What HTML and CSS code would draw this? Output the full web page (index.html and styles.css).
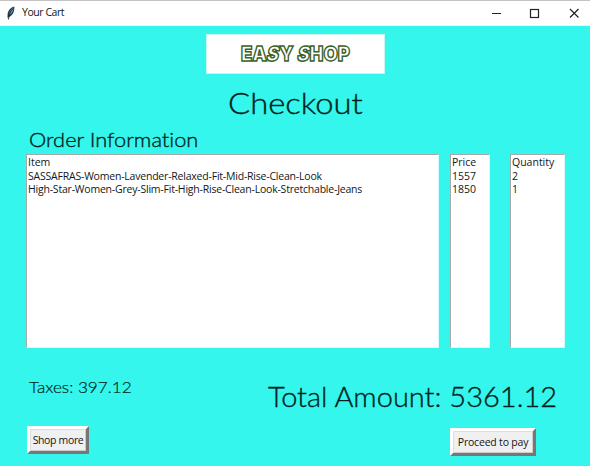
FILE: index.html
```html
<!DOCTYPE html>
<html lang="en">
<head>
<meta charset="utf-8">
<title>Your Cart</title>
<link rel="stylesheet" href="styles.css">
</head>
<body>
<header class="titlebar">
  <svg class="feather" width="10" height="14" viewBox="0 0 10 14"><path d="M1.500 12 L1.600 9 C1.500 5.500 4 1.500 8.300 .5 C8.700 5 7 9.500 3 11Z" fill="#263849"/><path d="M3 9 C2.800 6 5 3 7.500 1.500 C7.600 4.500 6 7.500 3.700 8.700Z" fill="#6795c2"/><path d="M2.500 13.500 C2.800 9 4 5.500 7 2.500" fill="none" stroke="#17202b" stroke-width=".9"/></svg>
  <span class="window-title">Your Cart</span>
  <svg class="controls" width="90" height="12" viewBox="0 0 90 12" fill="none" stroke="#222" stroke-width="1.200"><path d="M2 6.500h9M80 2l8.500 8.500M88.500 2L80 10.500"/><rect x="40.500" y="2.500" width="8" height="8"/></svg>
</header>
<main class="cart">
  <div class="logo"><span class="logo-text">EA<i>S</i>Y <i>S</i>HOP</span></div>
  <h1 class="checkout"><span>Checkout</span></h1>
  <h2 class="order"><span>Order Information</span></h2>
  <section class="lists">
    <ul class="list items"><li>Item</li><li class="product">SASSAFRAS-Women-Lavender-Relaxed-Fit-Mid-Rise-Clean-Look</li><li class="product">High-Star-Women-Grey-Slim-Fit-High-Rise-Clean-Look-Stretchable-Jeans</li></ul>
    <ul class="list prices"><li>Price</li><li>1557</li><li>1850</li></ul>
    <ul class="list quantities"><li>Quantity</li><li>2</li><li>1</li></ul>
  </section>
  <section class="totals">
    <p class="taxes"><span>Taxes: 397.12</span></p>
    <p class="total"><span>Total Amount: 5361.12</span></p>
  </section>
  <footer class="actions">
    <button class="shop">Shop more</button>
    <button class="pay">Proceed to pay</button>
  </footer>
</main>
</body>
</html>
```
FILE: styles.css
```css
* { box-sizing: border-box; margin: 0; padding: 0; }
body { width: 590px; height: 466px; overflow: hidden; background: #35f6ec; color: #101820; font: 10.500px/13.500px "Open Sans", "Noto Sans", sans-serif; }
.titlebar { height: 26px; display: flex; align-items: center; background: #fff; border-top: 1px solid #c4c2c3; border-bottom: 1px solid #d5fffb; padding: 0 10px 0 6px; }
.feather { margin-top: -1px; }
.window-title { margin-left: 6px; font-size: 10.500px; letter-spacing: -.45px; }
.controls { margin-left: auto; }
.cart { height: 440px; padding-top: 8px; display: flex; flex-direction: column; }
.logo { width: 179px; height: 40px; margin-left: 206px; background: #fff; border: 1px solid #c8f5ee; display: flex; align-items: center; justify-content: center; }
.logo-text { font: 900 20.500px/24px Inter, sans-serif; color: #fff; -webkit-text-stroke: 1.500px #3b6126; white-space: nowrap; transform: scaleX(.9); }
.logo-text i { display: inline-block; font-style: normal; transform: skewX(-14deg); }
h1, h2, .taxes, .total { font-family: Lato, sans-serif; font-weight: 300; color: #001f20; white-space: nowrap; font-variant-ligatures: none; -webkit-text-stroke: .35px #001f20; }
h1 span, h2 span, .taxes span, .total span { display: inline-block; transform-origin: left; }
.checkout { height: 34px; margin: 12px 0 0 228px; font-size: 29px; line-height: 34px; }
.order { height: 24px; margin: 7px 0 1px 29px; font-size: 20px; line-height: 24px; }
.checkout span { transform: scaleX(1.130); }
.order span { transform: scaleX(1.090); }
.lists { height: 194px; margin: 2px 0 0 26px; display: flex; }
.list { list-style: none; background: #fff; border: 1px solid #d5faf7; border-top-color: #a5a9aa; border-left-color: #a5a9aa; padding: 1px 0 0 1px; white-space: nowrap; overflow: hidden; }
.product { letter-spacing: -.21px; }
.items { width: 413px; }
.prices { width: 40px; margin-left: 11px; }
.quantities { width: 55px; margin-left: 20px; }
.totals { height: 78px; display: flex; padding-left: 29px; }
.taxes { width: 239px; padding-top: 29px; font-size: 16.500px; line-height: 20px; -webkit-text-stroke-width: .2px; }
.taxes span { transform: scaleX(1.040); }
.total { padding-top: 31px; font-size: 28px; line-height: 34px; }
.total span { transform: scaleX(1.036); }
.actions { display: flex; align-items: flex-start; padding-left: 27px; }
button { font: 10.500px/14px "Open Sans", sans-serif; color: #151515; white-space: nowrap; height: 28px; background: #f0f0f0; border: 3px solid; border-color: #fff #777 #777 #fff; box-shadow: inset 1px 1px #ddd, inset -1px -1px #ccc; letter-spacing: -.35px; }
.shop { width: 62px; }
.pay { width: 86px; margin: 2px 0 0 361px; letter-spacing: -.2px; }
```
